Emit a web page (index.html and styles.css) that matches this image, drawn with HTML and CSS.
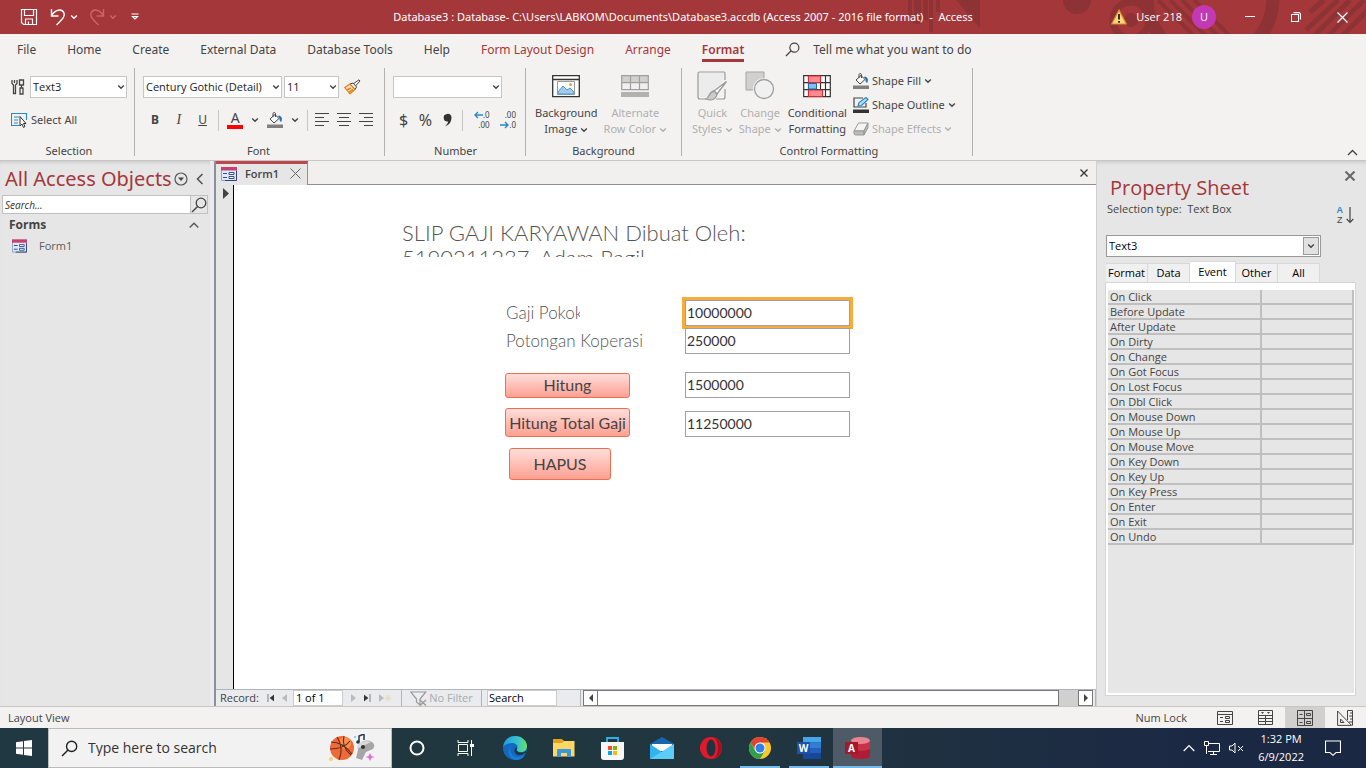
FILE: index.html
```html
<!DOCTYPE html>
<html lang="en">
<head>
<meta charset="utf-8">
<title>Database3 - Access</title>
<meta name="viewport" content="width=device-width, initial-scale=1">
<link rel="stylesheet" href="styles.css">
</head>
<body>
<svg class="sprite" aria-hidden="true">
  <symbol id="chev" viewBox="0 0 8 8"><path d="M1.2 2.5 4 5.3 6.800 2.500" fill="none" stroke="currentColor" stroke-width="1.4"/></symbol>
  <symbol id="lens" viewBox="0 0 16 16"><circle cx="10" cy="6" r="4.800" fill="none" stroke="currentColor" stroke-width="1.3"/><path d="M6.600 9.400 1 15" stroke="currentColor" stroke-width="1.4"/></symbol>
  <symbol id="form" viewBox="0 0 16 14"><path d="M.5 .5h15v13H.5z" fill="#dfe9f7" stroke="#8fa3c9"/><path d="M0 0h16v3.500H0z" fill="#c6426e"/><path d="M2 6.500h4M2 10.500h4" stroke="#33518f" stroke-width="1.200"/><path d="M8 5.500h5v2H8zM8 9.500h5v2H8z" fill="#fff" stroke="#33518f"/><path d="M15.500 4v9.500H4" fill="none" stroke="#33406e"/></symbol>
  <symbol id="bucket" viewBox="0 0 16 16"><path d="M3 7 8 2.500l4 4-5 4.500zM6 5V1.500a1.300 1.300 0 0 1 2.500 0V5" fill="#f8f8f8" stroke="#444"/><path d="M11.500 4c2.500 0 3.500 2 2.500 5.500-1-.5-1-2-1-3.500z" fill="#1e6fb8" stroke="#1e6fb8"/><path d="M0 12.500h16V16H0z" fill="#808080"/></symbol>
</svg>

<header class="titlebar">
  <svg class="title-art" viewBox="0 0 466 34" preserveAspectRatio="xMaxYMid slice" aria-hidden="true">
    <g fill="#8d3335"><path d="M8 0h4v15H8zM14 0h7v24h-7zM23 0h5v20h-5zM29 0h4v32h-4zM36 0h4v12h-4zM56 0h24v28z"/><circle cx="177" cy="0" r="14"/><circle cx="231" cy="20" r="7"/></g>
    <g fill="none" stroke="#8d3335"><circle cx="231" cy="20" r="18" stroke-width="7"/><circle cx="310" cy="-2" r="63" stroke-width="13"/><path d="M258 0l36 36M270 0l36 36M282 0l36 36M294 0l36 36" stroke-width="4"/><path d="M424 0l-14 12M438 0l-32 30M450 0l-36 36M464 0l-36 36M478 0l-36 36" stroke-width="5"/></g>
  </svg>
  <div class="quick-access">
    <button aria-label="Save"><svg width="18" height="18" viewBox="0 0 18 18" fill="none" stroke="#fff" stroke-width="1.200"><path d="M1.500 1.500h15v15h-13l-2-2zM4.500 1.500v6h9v-6M5.500 16v-5h7v5M8.500 16v-2.500"/></svg></button>
    <button aria-label="Undo"><svg width="16" height="18" viewBox="0 0 16 18" fill="none" stroke="#fff" stroke-width="1.400"><path d="M1.500 1v7h7M1.500 8C5 1 12 .5 14 5c1 3 0 4.500-7.500 12"/></svg></button>
    <svg class="chev" width="8" height="8"><use href="#chev"/></svg>
    <button class="faded" aria-label="Redo"><svg width="16" height="18" viewBox="0 0 16 18" fill="none" stroke="currentColor" stroke-width="1.400"><path d="M14.500 1v7h-7M14.500 8C11 1 4 .5 2 5c-1 3 0 4.500 7.500 12"/></svg></button>
    <svg class="chev faded" width="8" height="8"><use href="#chev"/></svg>
    <button class="customize" aria-label="Customize toolbar"><svg width="8" height="8" viewBox="0 0 8 8" fill="none" stroke="#fff" stroke-width="1.200"><path d="M.5 1h7M1.500 3.500 4 6l2.500-2.500z"/></svg></button>
  </div>
  <h1 class="window-title">Database3 : Database- C:\Users\LABKOM\Documents\Database3.accdb (Access 2007 - 2016 file format)&nbsp; -&nbsp; Access</h1>
  <div class="account">
    <svg width="16" height="16" viewBox="0 0 16 16"><path d="M8 1 15.300 15H.7z" fill="#f9d77e" stroke="#e08a28" stroke-width="1.200"/><path d="M8 5v5.500M8 12v1.800" stroke="#222" stroke-width="1.800"/></svg>
    <span>User 218</span>
    <span class="avatar">U</span>
    <button aria-label="Minimize"><svg width="10" height="12" viewBox="0 0 10 12"><path d="M0 5.500h10" stroke="#fff"/></svg></button>
    <button aria-label="Restore"><svg width="10" height="10" viewBox="0 0 10 10" fill="none" stroke="#fff" stroke-width="1.100"><path d="M.5 2.500h7v7h-7zM2.500 .6h5q2 0 2 2v5"/></svg></button>
    <button aria-label="Close"><svg width="11" height="11" viewBox="0 0 11 11"><path d="M.5 .5l10 10M10.500 .5l-10 10" stroke="#fff" stroke-width="1.200"/></svg></button>
  </div>
</header>

<nav class="ribbon-tabs">
  <button>File</button><button>Home</button><button>Create</button><button>External Data</button><button>Database Tools</button><button>Help</button>
  <button class="context">Form Layout Design</button><button class="context">Arrange</button><button class="context active">Format</button>
  <button class="tell-me"><svg width="15" height="15"><use href="#lens"/></svg>Tell me what you want to do</button>
</nav>

<section class="ribbon">
  <div class="group">
    <div class="tools">
      <svg width="14" height="16" viewBox="0 0 14 16" fill="none" stroke="#444" stroke-width="1.300"><path d="M1 1v3.500L2.500 6v8.500h2V6L6 4.500V1M3.500 1v3M8.500 1h4v5h-4zM10.500 6v3M8.500 9h4M9 9v6h3V9"/></svg>
      <span class="combo w-object"><select aria-label="Object"><option>Text3</option></select><svg><use href="#chev"/></svg></span>
    </div>
    <div class="tools second">
      <button class="small"><svg width="17" height="16" viewBox="0 0 17 16"><path d="M15.500 8V1.500H.5v12h8M3 5h5M3 8h4M3 11h4" fill="none" stroke="#2b88c8" stroke-width="1.100"/><path d="M9 4.500v9.500l2-2 1.500 3.500 1.500-1-1.500-3H15z" fill="#fff" stroke="#333"/></svg>Select All</button>
    </div>
    <div class="caption">Selection</div>
  </div>

  <div class="group g-font">
    <div class="tools tight">
      <span class="combo w-font"><select aria-label="Font"><option>Century Gothic (Detail)</option></select><svg><use href="#chev"/></svg></span>
      <span class="combo w-size"><select aria-label="Font size"><option>11</option></select><svg><use href="#chev"/></svg></span>
      <button class="painter" aria-label="Format painter"><svg width="17" height="16" viewBox="0 0 17 16"><path d="M9 5 15 .8l1 1.200-5 5.500" fill="#fff" stroke="#444"/><path d="M6 5l3-1 3.500 4-1.500 2.500z" fill="#fff" stroke="#444"/><path d="M6 5 .8 8.500 6 15l5-4.500z" fill="#fbe3c8" stroke="#e2811d" stroke-width="1.200"/><path d="M3 11l4-2M5 13.500l4-3" stroke="#e2811d" stroke-width="1.600"/></svg></button>
    </div>
    <div class="tools second font-row">
      <button class="letter"><b>B</b></button><button class="letter"><i>I</i></button><button class="letter"><u>U</u></button>
      <span class="rule"></span>
      <button class="font-color" aria-label="Font color">A</button><svg class="chev" width="8" height="8"><use href="#chev"/></svg>
      <button aria-label="Background color"><svg width="16" height="16"><use href="#bucket"/></svg></button><svg class="chev" width="8" height="8"><use href="#chev"/></svg>
      <span class="rule"></span>
      <button aria-label="Align left"><svg width="14" height="14"><path d="M0 .5h14M0 4.500h9M0 8.500h14M0 12.500h9" stroke="#444"/></svg></button>
      <button aria-label="Center"><svg width="14" height="14"><path d="M0 .5h14M2 4.500h10M0 8.500h14M2 12.500h10" stroke="#444"/></svg></button>
      <button aria-label="Align right"><svg width="14" height="14"><path d="M0 .5h14M5 4.500h9M0 8.500h14M5 12.500h9" stroke="#444"/></svg></button>
    </div>
    <div class="caption">Font</div>
  </div>

  <div class="group g-number">
    <div class="tools">
      <span class="combo w-number"><select aria-label="Number format"><option></option></select><svg><use href="#chev"/></svg></span>
    </div>
    <div class="tools second number-row">
      <button>$</button><button>%</button><button aria-label="Comma style"><svg width="9" height="14" viewBox="0 0 9 14"><path d="M4 1a3.500 3.500 0 0 1 4.500 3.500C8.500 9 6 12 2 13.500c2-2 3-3.500 3-5A3.700 3.700 0 1 1 4 1z" fill="#333"/></svg></button>
      <span class="rule"></span>
      <button class="decimals" aria-label="Increase decimals"><span><svg width="9" height="8" viewBox="0 0 9 8"><path d="M9 4H1M4 1 1 4l3 3" fill="none" stroke="#2b88c8" stroke-width="1.400"/></svg>.0</span><span>.00</span></button>
      <button class="decimals" aria-label="Decrease decimals"><span>.00</span><span><svg width="9" height="8" viewBox="0 0 9 8"><path d="M0 4h8M5 1l3 3-3 3" fill="none" stroke="#2b88c8" stroke-width="1.400"/></svg>.0</span></button>
    </div>
    <div class="caption">Number</div>
  </div>

  <div class="group g-back">
    <div class="bigs">
      <button class="big"><svg width="28" height="28" viewBox="0 0 28 28"><path d="M.7 3.700h26.600v21H.7zM.7 7.500h26.600" fill="#fff" stroke="#333" stroke-width="1.300"/><path d="M5.500 9.500h17v13h-17z" fill="#fff" stroke="#999"/><path d="M6 20l5-6 4 4 3-2 4 4v2H6z" fill="#9ecbee" stroke="#4d9ad4"/><circle cx="18.500" cy="12.500" r="1.500" fill="#eaa04e"/></svg><span>Background<br>Image <svg class="chev" width="8" height="8"><use href="#chev"/></svg></span></button>
      <button class="big off"><svg width="28" height="28" viewBox="0 0 28 28"><path d="M.7 3.700h26.600v14H.7z" fill="#f0f0f0"/><path d="M.7 3.700h26.600v7H.7z" fill="#d2d0ce"/><path d="M.7 3.700h26.600v14H.7zM.7 10.700h26.600M9.500 3.700v14M18.500 3.700v14" fill="none" stroke="#a19f9d" stroke-width="1.200"/><path d="M0 20h28v5H0z" fill="#b3b0ad"/></svg><span>Alternate<br>Row Color <svg class="chev" width="8" height="8"><use href="#chev"/></svg></span></button>
    </div>
    <div class="caption">Background</div>
  </div>

  <div class="group g-control">
    <div class="bigs">
      <button class="big off"><svg width="30" height="30" viewBox="0 0 30 30"><path d="M9 28H3q-2 0-2-2V2.500q0-1.500 1.500-1.500H27q1 0 1 1.500V9M28 18v8q0 2-2 2h-7" fill="none" stroke="#999" stroke-width="1.200"/><path d="M2 2h25v6L15 26H2z" fill="#ececec"/><path d="M29.500 10.500 20 23l-3-3z" fill="#fff" stroke="#999" stroke-width="1.300"/><path d="M17 20l3 3c-1 6-6 7-11 5 3-1 3-7 8-8z" fill="#ccc" stroke="#999" stroke-width="1.300"/></svg><span>Quick<br>Styles <svg class="chev" width="8" height="8"><use href="#chev"/></svg></span></button>
      <button class="big off"><svg width="30" height="30" viewBox="0 0 30 30"><path d="M1 1h18v18H1z" fill="#d2d0ce" stroke="#a5a5a5"/><circle cx="19" cy="18" r="11" fill="#f3f2f1"/><circle cx="19" cy="18" r="9.500" fill="#f0f0f0" stroke="#a0a0a0" stroke-width="1.300"/></svg><span>Change<br>Shape <svg class="chev" width="8" height="8"><use href="#chev"/></svg></span></button>
      <button class="big"><svg width="28" height="28" viewBox="0 0 28 28"><path d="M.7 3.700h26.600v21H.7zM.7 10.700h26.600M.7 17.700h26.600M5.500 3.700v21M17.500 3.700v21M22.500 3.700v21" fill="#fff" stroke="#333" stroke-width="1.200"/><path d="M5.500 4h12v6.500h-12zM5.500 18h14v6.500h-14z" fill="#ff8a8f" stroke="#e3262e"/><path d="M5.500 11.500h8v5.500h-8z" fill="#83beec" stroke="#1769b5"/></svg><span>Conditional<br>Formatting</span></button>
      <div class="stack">
        <button class="small"><svg width="16" height="16"><use href="#bucket"/></svg>Shape Fill <svg class="chev" width="8" height="8"><use href="#chev"/></svg></button>
        <button class="small"><svg width="16" height="16" viewBox="0 0 16 16"><path d="M10 1H1v9h12V6" fill="none" stroke="#444" stroke-width="1.200"/><path d="M5 9l1-3.500L13 .5l2 2-6.500 6z" fill="#b8dcf5" stroke="#2b88c8" stroke-width="1.200"/><path d="M0 12.500h16V16H0z" fill="#333"/></svg>Shape Outline <svg class="chev" width="8" height="8"><use href="#chev"/></svg></button>
        <button class="small off"><svg width="16" height="14" viewBox="0 0 16 14"><path d="M1 9 5.500 1H15l-4 8z" fill="#f4f4f4" stroke="#999"/><path d="M1 9h10v4H2.500Q1 13 1 11zM11 9l4-8v4.500L11 13z" fill="#bbb" stroke="#999"/></svg>Shape Effects <svg class="chev" width="8" height="8"><use href="#chev"/></svg></button>
      </div>
    </div>
    <div class="caption">Control Formatting</div>
  </div>
  <button class="collapse" aria-label="Collapse ribbon"><svg width="11" height="7" viewBox="0 0 11 7"><path d="M1 6l4.500-4.500L10 6" fill="none" stroke="#444" stroke-width="1.400"/></svg></button>
</section>

<main class="workspace">
  <aside class="objects">
    <div class="objects-head">
      <h2>All Access Objects</h2>
      <button aria-label="Choose category"><svg width="14" height="14" viewBox="0 0 14 14"><circle cx="7" cy="7" r="6" fill="none" stroke="#555" stroke-width="1.200"/><path d="M4 5.500h6L7 9z" fill="#444"/></svg></button>
      <button aria-label="Collapse pane"><svg width="8" height="12" viewBox="0 0 8 12"><path d="M6.500 1l-5 5 5 5" fill="none" stroke="#555" stroke-width="1.600"/></svg></button>
    </div>
    <div class="object-search"><input type="text" placeholder="Search..." aria-label="Search objects"><button aria-label="Search"><svg width="16" height="16"><use href="#lens"/></svg></button></div>
    <div class="object-group"><strong>Forms</strong><svg width="10" height="6" viewBox="0 0 10 6"><path d="M.7 5.500 5 1.200l4.300 4.300" fill="none" stroke="#555" stroke-width="1.400"/></svg></div>
    <a class="object-item" href="#form1"><svg width="15" height="14"><use href="#form"/></svg>Form1</a>
  </aside>

  <section class="document" id="form1">
    <div class="doc-tabs">
      <div class="doc-tab"><svg width="16" height="14"><use href="#form"/></svg><span>Form1</span><button aria-label="Close tab"><svg width="11" height="11" viewBox="0 0 11 11"><path d="M.5 .5l10 10M10.500 .5l-10 10" stroke="#666"/></svg></button></div>
      <button class="doc-close" aria-label="Close document"><svg width="8" height="8" viewBox="0 0 8 8"><path d="M.5 .5l7 7M7.500 .5l-7 7" stroke="#333" stroke-width="1.300"/></svg></button>
    </div>
    <div class="form-view">
      <div class="selector"><svg width="6" height="11" viewBox="0 0 6 11"><path d="M0 0l6 5.500L0 11z" fill="#444"/></svg></div>
      <form class="canvas">
        <h2 class="form-title">SLIP GAJI KARYAWAN Dibuat Oleh:<br>5190211237_Adam Ragil</h2>
        <div class="fields">
          <div class="field"><label class="clipped" for="pokok">Gaji Pokok</label><input class="current" id="pokok" type="text" value="10000000"></div>
          <div class="field"><label for="potongan">Potongan Koperasi</label><input id="potongan" type="text" value="250000"></div>
          <div class="field action"><button type="button">Hitung</button><input type="text" value="1500000" aria-label="Hitung"></div>
          <div class="field action total"><button type="button">Hitung Total Gaji</button><input type="text" value="11250000" aria-label="Total Gaji"></div>
          <div class="field clear"><button type="button">HAPUS</button></div>
        </div>
      </form>
    </div>
    <div class="record-bar">
      <div class="record-nav">
        <label for="record">Record:</label>
        <button aria-label="First"><svg width="7" height="8"><path d="M1 0v8M7 1v6L3 4z" fill="#333" stroke="#333" stroke-width=".6"/></svg></button>
        <button aria-label="Previous"><svg width="5" height="8"><path d="M5 0v8L0 4z" fill="#bbb"/></svg></button>
        <input id="record" type="text" value="1 of 1">
        <button aria-label="Next"><svg width="5" height="8"><path d="M0 0v8l5-4z" fill="#bbb"/></svg></button>
        <button aria-label="Last"><svg width="7" height="8"><path d="M6 0v8M0 1v6l4-3z" fill="#333" stroke="#333" stroke-width=".6"/></svg></button>
        <button aria-label="New"><svg width="13" height="8"><path d="M0 0v8l5-4z" fill="#bbb"/><path d="M9 0v8M5.500 4h7M6.500 1.500l5 5M11.500 1.500l-5 5" stroke="#ecd9b8"/></svg></button>
      </div>
      <button class="filter"><svg width="17" height="15" viewBox="0 0 17 15"><path d="M.7 1h15L10 8v6L6.500 11V8z" fill="#eee" stroke="#999" stroke-width="1.200"/><path d="M10 9l6 5.500M16 9l-6 5.500" stroke="#999" stroke-width="1.300"/></svg>No Filter</button>
      <div class="record-search"><input type="text" value="Search" aria-label="Search records"></div>
      <div class="scroll">
        <button aria-label="Scroll left"><svg width="4" height="8"><path d="M4 0v8L0 4z" fill="#444"/></svg></button>
        <div class="track"><div class="thumb"></div></div>
        <button aria-label="Scroll right"><svg width="4" height="8"><path d="M0 0v8l4-4z" fill="#444"/></svg></button>
      </div>
    </div>
  </section>

  <aside class="properties">
    <button class="sheet-close" aria-label="Close property sheet"><svg width="10" height="10" viewBox="0 0 10 10"><path d="M.5 .5l9 9M9.500 .5l-9 9" stroke="#666" stroke-width="2"/></svg></button>
    <h2>Property Sheet</h2>
    <div class="selection-type"><span>Selection type:&nbsp; Text Box</span><button aria-label="Sort"><span class="sort"><b>A</b><span>Z</span></span><svg width="8" height="17" viewBox="0 0 8 17"><path d="M4 0v15M.7 12 4 15.500 7.300 12" fill="none" stroke="#444" stroke-width="1.200"/></svg></button></div>
    <span class="combo sheet-combo"><select aria-label="Selected control"><option>Text3</option></select><svg><use href="#chev"/></svg></span>
    <div class="sheet-tabs"><button>Format</button><button>Data</button><button class="active">Event</button><button>Other</button><button>All</button></div>
    <div class="sheet">
      <table>
        <tr><th>On Click</th><td></td></tr><tr><th>Before Update</th><td></td></tr><tr><th>After Update</th><td></td></tr>
        <tr><th>On Dirty</th><td></td></tr><tr><th>On Change</th><td></td></tr><tr><th>On Got Focus</th><td></td></tr>
        <tr><th>On Lost Focus</th><td></td></tr><tr><th>On Dbl Click</th><td></td></tr><tr><th>On Mouse Down</th><td></td></tr>
        <tr><th>On Mouse Up</th><td></td></tr><tr><th>On Mouse Move</th><td></td></tr><tr><th>On Key Down</th><td></td></tr>
        <tr><th>On Key Up</th><td></td></tr><tr><th>On Key Press</th><td></td></tr><tr><th>On Enter</th><td></td></tr>
        <tr><th>On Exit</th><td></td></tr><tr><th>On Undo</th><td></td></tr>
      </table>
    </div>
  </aside>
</main>

<footer class="status">
  <span>Layout View</span>
  <div class="views">
    <span>Num Lock</span>
    <button aria-label="Form view"><svg width="16" height="14" fill="none" stroke="#444"><path d="M.5 .5h15v13H.5zM.5 3.500h15M3 6.500h3M3 10.500h3M8.500 5.500h4v2h-4zM8.500 9.500h4v2h-4z"/></svg></button>
    <button aria-label="Datasheet view"><svg width="15" height="15" fill="none" stroke="#444"><path d="M.5 .5h14v14H.5zM.5 5.500h14M.5 8.500h14M.5 11.500h14M7.500 5v9"/><path d="M3 2h3L4.500 4zM9 2h3l-1.500 2z" fill="#444" stroke="none"/></svg></button>
    <button class="active" aria-label="Layout view"><svg width="16" height="16" fill="none" stroke="#444"><path d="M.5 .5h15v15H.5zM.5 8.500h15M7.500 .5v15M2.500 4.500h3M2.500 12.500h3M9.500 3.500h4v2h-4zM9.500 11.500h4v2h-4z"/></svg></button>
    <button aria-label="Design view"><svg width="16" height="16" fill="none" stroke="#444"><path d="M.6 1v14.400h14zM3.500 9v3.500H7zM10.500 10V.5h5v15M13 3h2M12 6h3M13 9h2M12 12h3"/></svg></button>
  </div>
</footer>

<div class="taskbar">
  <button class="start" aria-label="Start"><svg width="16" height="16" viewBox="0 0 16 16"><path d="M0 2.200 7 1.200v6.300H0zM8 1l8-1v7.500H8zM0 8.500h7v6.300l-7-1zM8 8.500h8V16l-8-1z" fill="#fff"/></svg></button>
  <label class="search"><svg width="17" height="17"><use href="#lens"/></svg><input type="text" placeholder="Type here to search">
    <svg width="46" height="28" viewBox="0 0 46 28"><circle cx="13" cy="14" r="12" fill="#f06a35"/><circle cx="16" cy="9" r="6" fill="#fb9148"/><path d="M2 8q12 0 21 12M1 15q14 0 20-8M8 3q7 10 2 23M15 2q-3 11 7 19" fill="none" stroke="#622b23" stroke-width="1.100"/><path d="M29 11q7-7 14-3 4 3 1 7l-7 3-4 8-6-2 2-8z" fill="#a6a6a8"/><path d="M29 10q7-5 13-2l-6 3-8 4z" fill="#d9d9dc"/><circle cx="34" cy="13" r="2" fill="#333"/><path d="M30 8V2l5-2v6" fill="none" stroke="#26374b" stroke-width="1.500"/><circle cx="29" cy="8" r="1.800" fill="#26374b"/><path d="M41 19l1.500 3 3 1-3 1-1.500 3-1.500-3-3-1 3-1z" fill="#e071d2"/><circle cx="2" cy="25" r="2" fill="#f7d36d"/><circle cx="26" cy="3" r="1" fill="#69c6dd"/></svg></label>
  <div class="apps">
    <button aria-label="Cortana"><svg width="16" height="16"><circle cx="8" cy="8" r="6.500" fill="none" stroke="#fff" stroke-width="2"/></svg></button>
    <button aria-label="Task view"><svg width="17" height="16" fill="none" stroke="#fff"><path d="M1 0v2.500h10V0M1.500 4.500h9v7h-9zM1 16v-2.500h10V16M14.500 0v16"/><path d="M13 4h4v3h-4z" fill="#fff" stroke="none"/></svg></button>
    <button aria-label="Edge"><svg width="24" height="24" viewBox="0 0 24 24"><defs><linearGradient id="edge" x1="0" x2="1"><stop offset="0" stop-color="#1f9be0"/><stop offset=".6" stop-color="#35c3d4"/><stop offset="1" stop-color="#6ae05b"/></linearGradient></defs><circle cx="12" cy="12" r="12" fill="#1568bd"/><path d="M0 11C1 4 6 0 12 0c7 0 12 5 12 10 0 4-3 6-6 6-3 0-5-1-4-3 2-4-2-6-5-6-4 0-8 2-9 4z" fill="url(#edge)"/><path d="M9 9c-4 6 0 12 6 12 4 0 6-2 7-3-2 6-7 6-10 6-6-1-9-10-3-15z" fill="#1280d8"/><path d="M13.500 11q-4 3-.5 7 4 3 9-1 2 0 1-2-5 3-9 0-1-1 0-3z" fill="#203741"/></svg></button>
    <button aria-label="File Explorer"><svg width="22" height="18" viewBox="0 0 22 18"><path d="M0 0h9l2 2h10v15H0z" fill="#e3a21a"/><path d="M0 4h9l2-2h10.500v15.500H0z" fill="#ffd766"/><path d="M4 18v-7q0-1 1-1h12q1 0 1 1v7h-4v-4H8v4z" fill="#3d97dc"/></svg></button>
    <button aria-label="Store"><svg width="23" height="23" viewBox="0 0 23 23"><path d="M6 6V1h11v5" fill="none" stroke="#28b3e8" stroke-width="1.800"/><path d="M0 5h23v15q0 3-3 3H3q-3 0-3-3z" fill="#f7f7f7"/><path d="M7 9h4v4H7z" fill="#f25022"/><path d="M12 9h4v4h-4z" fill="#7fba00"/><path d="M7 14h4v4H7z" fill="#00a4ef"/><path d="M12 14h4v4h-4z" fill="#ffb900"/></svg></button>
    <button aria-label="Mail"><svg width="24" height="22" viewBox="0 0 24 22"><path d="M0 7 12 0l12 7v5H0z" fill="#1667b0"/><path d="M2 7h20v7H2z" fill="#fff"/><path d="M0 7l12 8 12-8v15H0z" fill="#31b4ee"/><path d="M0 22 24 7v15z" fill="#5bcdf8"/></svg></button>
    <button aria-label="Opera"><svg width="22" height="22" viewBox="0 0 22 22"><circle cx="11" cy="11" r="11" fill="#e5182a"/><path d="M14 1q8 3 8 10t-8 10q4-3 4-10T14 1z" fill="#a80f1d"/><ellipse cx="11" cy="11" rx="4.500" ry="8.500" fill="#20343f"/></svg></button>
    <button class="running" aria-label="Chrome"><svg width="22" height="22" viewBox="0 0 22 22"><circle cx="11" cy="11" r="11" fill="#fbc82c"/><path d="M1.500 5.500A11 11 0 0 1 20.500 5.500H11L7 13.500z" fill="#e34133"/><path d="M1.500 5.500A11 11 0 0 0 11 22l5-8.500-5 2-5-2.500z" fill="#2da04d"/><circle cx="11" cy="11" r="5.500" fill="#fff"/><circle cx="11" cy="11" r="4.500" fill="#357ee8"/></svg></button>
    <button class="running" aria-label="Word"><svg width="24" height="22" viewBox="0 0 24 22"><path d="M6 0h18v5.500H6z" fill="#45a5ed"/><path d="M6 5.500h18V11H6z" fill="#2f7fd5"/><path d="M6 11h18v5.500H6z" fill="#2260bd"/><path d="M6 16.500h18V22H6z" fill="#17479b"/><path d="M0 5h13v12H0z" fill="#1c50ad"/><text x="6.500" y="14.500" class="app-letter">W</text></svg></button>
    <button class="running active" aria-label="Access"><svg width="25" height="22" viewBox="0 0 25 22"><path d="M6 3v16q0 3 9.500 3t9.500-3V3z" fill="#c9304a"/><path d="M6 12q9 4 19 0v7q0 3-9.500 3T6 19z" fill="#ae1d33"/><ellipse cx="15.500" cy="3.500" rx="9.500" ry="3.500" fill="#e98591"/><path d="M0 5h13v12H0z" fill="#a5172d"/><text x="6.500" y="14.500" class="app-letter">A</text></svg></button>
  </div>
  <div class="tray">
    <button aria-label="Hidden icons"><svg width="12" height="8" viewBox="0 0 12 8" fill="none" stroke="#fff" stroke-width="1.200"><path d="M.7 7 6 1.500 11.300 7"/></svg></button>
    <button aria-label="Network"><svg width="16" height="14" fill="none" stroke="#fff"><path d="M4 2.500h11.500v8H4M9.500 11v2M6 13.500h7M.5 .5h4v4h-4zM2.500 5v8"/></svg></button>
    <button aria-label="Volume"><svg width="15" height="12" fill="none" stroke="#fff"><path d="M.5 4v4H3l3 3V1L3 4zM9 4l5 5M14 4L9 9"/></svg></button>
    <div class="clock"><time>1:32 PM</time><time>6/9/2022</time></div>
    <button aria-label="Notifications"><svg width="16" height="16" fill="none" stroke="#fff" stroke-width="1.100"><path d="M.5 1h15v11.500H11L8 15.300 5 12.500H.5z"/></svg></button>
  </div>
</div>
</body>
</html>
```
FILE: styles.css
```css
* { box-sizing: border-box; }

body {
  margin: 0;
  min-height: 100vh;
  display: flex;
  flex-direction: column;
  background: #e6e6e6;
  color: #444;
  font: 12px/16px "Open Sans", "Noto Sans", sans-serif;
}

button, input, select { font: inherit; color: inherit; }
button { padding: 0; border: 0; background: none; display: inline-flex; align-items: center; justify-content: center; white-space: nowrap; }
input, select { margin: 0; border-radius: 0; min-width: 0; }
h1, h2 { margin: 0; font-weight: 400; }
svg { flex: none; }
.sprite { position: absolute; width: 0; height: 0; }
.off { color: #b1afad; }

/* Title bar */
.titlebar {
  position: relative;
  display: grid;
  grid-template-columns: 1fr auto 1fr;
  align-items: center;
  height: 34px;
  background: #a4373a;
  color: #fff;
}
.titlebar > * { position: relative; }
.titlebar > .title-art { position: absolute; right: 0; top: 0; width: 466px; height: 34px; }
.window-title { font-family: "Noto Sans", sans-serif; font-size: 11px; white-space: nowrap; }
.quick-access { display: flex; align-items: center; padding-left: 20px; }
.quick-access button + .chev { margin-left: 4px; }
.quick-access button + button { margin-left: 12px; }
.quick-access .chev + button { margin-left: 11px; }
.quick-access .chev + .customize { margin-left: 14px; }
.faded { color: #ca6568; }
.account { display: flex; align-items: center; justify-content: flex-end; padding-right: 18px; font-size: 11px; }
.account > svg { margin-right: 9px; }
.avatar { width: 24px; height: 24px; margin: 0 29px 0 10px; border-radius: 50%; background: #c239b3; line-height: 24px; text-align: center; }
.account button + button { margin-left: 36px; }

/* Ribbon tabs */
.ribbon-tabs { display: flex; gap: 31px; height: 34px; padding: 0 17px; background: #f3f2f1; font-family: "Noto Sans", sans-serif; }
.ribbon-tabs button { height: 28px; padding-top: 6px; border-bottom: 3px solid transparent; }
.ribbon-tabs .context { color: #a4373a; }
.ribbon-tabs .active { border-bottom-color: #a4373a; font-weight: 600; }
.ribbon-tabs .tell-me { gap: 13px; margin-left: 10px; }

/* Ribbon */
.ribbon { display: flex; height: 93px; padding-bottom: 4px; background: #f3f2f1; border-bottom: 1px solid #c8c6c4; font-family: "Noto Sans", sans-serif; font-size: 11px; }
.group { display: flex; flex-direction: column; padding: 8px 7px 0 11px; border-right: 1px solid #b3b0ad; }
.g-font { width: 250px; padding: 8px 10px 0 8px; }
.g-number { padding: 8px 7px 0 8px; width: 141px; }
.g-back { width: 156px; padding: 1px 9px 0; }
.g-control { width: 291px; padding: 1px 6px 0 10px; }
.tools { display: flex; align-items: center; gap: 5px; height: 22px; }
.tools.tight { gap: 2px; }
.tools.second { margin-top: 11px; }
.caption { margin-top: auto; line-height: 10px; text-align: center; }
.painter { margin-left: 3px; }
.small { gap: 3px; }
.combo { position: relative; display: inline-flex; height: 22px; font-family: "Open Sans", sans-serif; }
.combo select { width: 100%; padding: 0 2px; border: 1px solid #c8c6c4; background: #fff; color: #222; appearance: none; }
.combo svg { position: absolute; right: 2px; top: 7px; width: 8px; height: 8px; pointer-events: none; }
.w-object { width: 97px; }
.w-font { width: 139px; }
.w-size { width: 55px; }
.w-number { width: 109px; }
.rule { width: 1px; height: 21px; background: #c8c6c4; }
.tools.font-row { gap: 0; justify-content: space-between; padding: 0 1px 0 4px; }
.letter { width: 16px; font-size: 12px; }
.letter i { font-family: "Liberation Serif", serif; font-size: 14px; }
.font-color { width: 16px; height: 17px; border-bottom: 4px solid #f00; font-size: 14px; line-height: 14px; }
.tools.number-row { gap: 0; justify-content: space-between; padding: 0 2px 0 6px; font-size: 16px; }
.decimals { flex-direction: column; align-items: flex-end; font-size: 8px; line-height: 10px; }
.decimals span { display: flex; align-items: center; }

.bigs { display: flex; align-items: flex-start; gap: 6px; }
.big { flex-direction: column; line-height: 16px; }
.big > svg { height: 30px; margin: 2px 0 4px; }
.big .chev { vertical-align: -1px; }
.stack { display: flex; flex-direction: column; align-items: flex-start; }
.stack .small { height: 24px; }
.collapse { margin: auto 8px 0 auto; }

/* Workspace */
.workspace { flex: 1; display: flex; min-height: 0; }
.objects { width: 214px; flex: none; padding: 4px 2px 0; border-right: 4px solid #eaebee; box-shadow: inset 0 4px 4px -3px #c4c4c4; }
.objects-head { display: flex; align-items: center; gap: 8px; padding-left: 3px; height: 28px; margin-bottom: 2px; }
.objects-head h2 { flex: 1; color: #a4373a; font-family: "Noto Sans", sans-serif; font-size: 20px; line-height: 28px; white-space: nowrap; margin-right: -8px; }
.objects-head button:last-child { margin-right: 4px; }
.object-search { display: flex; height: 19px; border: 1px solid #c0c0c0; font-size: 10px; }
.object-search input { flex: 1; padding: 0 2px; border: 0; background: #fff; font-style: italic; }
.object-search input::placeholder { color: #333; }
.object-search button { border-left: 1px solid #c0c0c0; }
.object-group { display: flex; align-items: center; justify-content: space-between; padding: 3px 9px 0 7px; }
.object-item { display: flex; align-items: center; gap: 12px; margin-top: 5px; padding-left: 10px; color: #5c5c5c; font-size: 11px; text-decoration: none; }

.document { flex: 1; min-width: 0; display: flex; flex-direction: column; border-left: 2px solid #8b909b; background: #fff; }
.doc-tabs { display: flex; justify-content: space-between; height: 24px; background: #f1f0ef; border-bottom: 1px solid #8b909b; }
.doc-tab { display: flex; align-items: center; height: 24px; padding: 0 6px 2px 5px; border-top: 3px solid #b9494f; border-right: 1px solid #8b909b; background: #e6e6e6; font-size: 11px; font-weight: 600; }
.doc-tab span { margin: 0 11px 0 8px; }
.doc-close { margin-right: 8px; }
.form-view { flex: 1; display: flex; }
.selector { width: 18px; padding: 2px 0 0 7px; background: #e6e6e6; border-right: 1px solid #000; }
.canvas { flex: 1; padding: 35px 0 0 168px; font-family: "Century Gothic", Lato, sans-serif; }
.form-title { height: 37px; overflow: hidden; color: #555; font-size: 22px; font-weight: 300; line-height: 25px; }
.fields { padding: 43px 0 0 103px; font-size: 16px; }
.field { display: grid; grid-template-columns: 180px 165px; align-items: center; margin-bottom: 2px; }
.field label { padding-left: 1px; color: #555; font-size: 17px; font-weight: 300; line-height: 20px; white-space: nowrap; }
.field label.clipped { width: 75px; overflow: hidden; }
.field input { height: 26px; padding: 0 1px 2px; border: 1px solid #a0a0a0; background: #fff; color: #333; font-size: 14px; }
.field .current { outline: 3px solid #fbab3c; }
.field button { width: 125px; height: 25px; border: 1px solid #ec6f50; border-radius: 3px; background: linear-gradient(#ffdeda, #ffa093); }
.action { margin-top: 18px; }
.action.total { margin-top: 10px; align-items: end; }
.action.total button { height: 29px; }
.clear { margin-top: 11px; padding-left: 4px; }
.clear button { width: 102px; height: 32px; }

.record-bar { display: flex; height: 17px; border-top: 1px solid #b0b3ba; background: #e9ebee; font-size: 11px; }
.record-bar > * { border-right: 1px solid #b0b3ba; }
.record-nav { display: flex; align-items: center; width: 186px; padding-left: 4px; gap: 8px; }
.record-nav input { width: 50px; height: 16px; padding: 0 2px; border: 1px solid #ccc; background: #fff; color: #000; margin-left: -2px; }
.filter { width: 80px; gap: 2px; color: #aaa; }
.record-search { width: 99px; padding-left: 5px; }
.record-search input { width: 70px; height: 16px; padding: 0 1px; border: 1px solid #ccc; background: #fff; color: #000; display: block; }
.scroll { flex: 1; display: flex; padding: 0 2px; }
.scroll button { width: 15px; border: 1px solid #777; background: #fff; }
.track { flex: 1; background: #d0d0d0; }
.thumb { width: 96%; height: 100%; border: 1px solid #777; border-left: 0; background: #fff; }

/* Property sheet */
.properties { position: relative; flex: none; width: 270px; display: flex; flex-direction: column; padding: 13px 10px 10px 9px; border-left: 1px solid #d0d0d0; box-shadow: inset 0 4px 4px -3px #c4c4c4; font-size: 11px; }
.sheet-close { position: absolute; top: 10px; right: 11px; }
.properties h2 { padding-left: 4px; color: #a4373a; font-size: 20px; line-height: 27px; }
.selection-type { display: flex; justify-content: space-between; padding: 0 2px 0 1px; }
.selection-type button { height: 18px; margin-top: 5px; gap: 3px; }
.sort { display: flex; flex-direction: column; font-family: "Liberation Sans", sans-serif; font-size: 9px; line-height: 10px; }
.sort b { color: #2b88c8; }
.sheet-combo { width: 215px; margin-top: 11px; }
.sheet-combo select { border: 1px solid #999; color: #000; }
.sheet-combo svg { top: 2px; width: 16px; height: 18px; padding: 3px; border: 1px solid #999; background: #e1e1e1; }
.sheet-tabs { display: flex; align-items: flex-end; margin-top: 4px; color: #000; }
.sheet-tabs button { width: 42px; height: 19px; border: 1px solid #d8d8d8; border-width: 1px 1px 0 0; background: #f0f0f0; }
.sheet-tabs .active { width: 46px; height: 21px; background: #fff; }
.sheet { flex: 1; margin-left: -1px; padding: 7px 1px 2px 2px; border: 1px solid #d5d5d5; background: linear-gradient(#e6e6e6, #e6e6e6) content-box, #fff; }
.sheet table { width: 100%; border-collapse: separate; border-spacing: 0; table-layout: fixed; }
.sheet th, .sheet td { height: 15px; padding: 0 2px; border-bottom: 2px solid #bfbfbf; border-right: 2px solid #bfbfbf; font-weight: 400; line-height: 13px; text-align: left; }
.sheet th { width: 154px; }

/* Status bar */
.status { display: flex; justify-content: space-between; align-items: center; height: 22px; padding: 0 1px 0 8px; border-top: 1px solid #c8c6c4; background: #f3f2f1; font-size: 11px; }
.views { display: flex; align-items: center; height: 100%; }
.views span { margin-right: 18px; }
.views button { width: 40px; height: 100%; }
.views .active { background: #d2d0ce; }

/* Taskbar */
.taskbar { display: flex; height: 40px; background: linear-gradient(90deg, #203841, #21363f 55%, #1b2844 88%); color: #fff; }
.start { width: 48px; }
.search { display: flex; align-items: center; flex: none; width: 344px; padding: 0 16px 0 12px; border: 1px solid #bbb; background: #f2f2f2; color: #222; }
.search input { flex: 1; margin-left: 10px; padding: 0; border: 0; background: none; font-size: 14px; }
.search input::placeholder { color: #333; opacity: 1; }
.apps { display: flex; }
.apps button { width: 49px; }
.apps .running { background: linear-gradient(#76b9ed, #76b9ed) center bottom / 40px 2px no-repeat; }
.apps .active { background-color: #4e5b66; background-size: 100% 2px; }
.app-letter { fill: #fff; font: 700 10px "Open Sans", sans-serif; text-anchor: middle; }
.tray { display: flex; align-items: center; gap: 9px; margin-left: auto; padding-right: 25px; font-size: 11px; }
.clock { display: flex; flex-direction: column; align-items: center; line-height: 18px; margin: 0 12px 0 5px; }
```
